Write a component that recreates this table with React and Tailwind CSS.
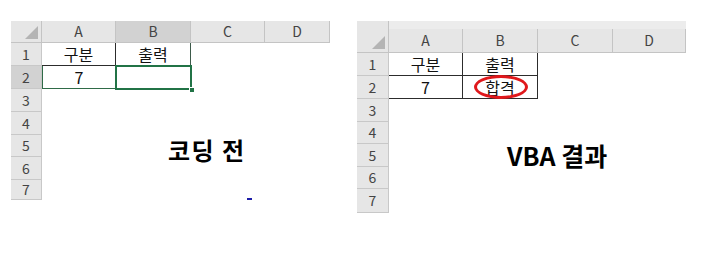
import React from 'react';

const FONT = { fontFamily: '"Noto Sans CJK KR", "Noto Sans", sans-serif' };

// corner of the sheet: the small grey triangle in the select-all box
function CornerCell({ className }) {
  return (
    <div className={`flex items-end justify-end pr-[3px] pb-[3px] bg-[#e6e6e6] border-r border-b border-[#c4c4c4] ${className || ''}`}>
      <svg width="13" height="13" viewBox="0 0 13 13">
        <polygon points="13,0 13,13 0,13" fill="#b4b4b4" />
      </svg>
    </div>
  );
}

function ColHead({ label, active }) {
  return (
    <div className={`flex items-center justify-center text-[14px] text-[#444] border-r border-b border-[#c4c4c4] ${active ? 'bg-[#d2d2d2]' : 'bg-[#e6e6e6]'}`}>
      {label}
    </div>
  );
}

function RowHead({ n, active }) {
  return (
    <div className={`flex items-center justify-center text-[14px] text-[#444] border-r border-b border-[#c8c8c8] ${active ? 'bg-[#d2d2d2]' : 'bg-[#e6e6e6]'}`}>
      {n}
    </div>
  );
}

function Cell({ children, boxed, className }) {
  return (
    <div className={`relative flex items-center justify-center text-[16px] text-[#111] ${boxed ? 'border-r border-b border-[#2c2c2c]' : ''} ${className || ''}`}>
      {children}
    </div>
  );
}

function BeforeSheet() {
  const rows = [3, 4, 5, 6, 7];
  return (
    <div className="relative ml-[11px] mt-[21px] w-[319px]">
      <div className="grid grid-cols-[31px_74px_75px_74px_65px] grid-rows-[22px_23px_23px_23px_23px_22px_23px_20px] overflow-hidden">
        <CornerCell />
        <ColHead label="A" />
        <ColHead label="B" active />
        <ColHead label="C" />
        <ColHead label="D" />

        <RowHead n={1} />
        <Cell boxed>구분</Cell>
        <Cell boxed className="border-[#3d5a4a]">출력</Cell>
        <Cell />
        <Cell />

        <RowHead n={2} active />
        <Cell boxed className="border-l border-l-[#2f6b47] border-b-[#2f6b47]">7</Cell>
        <Cell>
          <div className="absolute -left-px -top-px -right-px -bottom-px border-2 border-[#217346]" />
          <div className="absolute -right-[4px] -bottom-[4px] w-[6px] h-[6px] bg-[#217346] border border-white" />
        </Cell>
        <Cell />
        <Cell />

        {rows.map((n) => (
          <React.Fragment key={n}>
            <RowHead n={n} />
            <Cell />
            <Cell />
            <Cell />
            <Cell />
          </React.Fragment>
        ))}
      </div>
      <div className="absolute left-[157px] top-[117px] text-[24px] font-bold leading-none text-black tracking-[1.5px]">
        코딩 전
      </div>
    </div>
  );
}

function AfterSheet() {
  const rows = [3, 4, 5, 6, 7];
  return (
    <div className="relative ml-[27px] mt-[21px] w-[329px]">
      <div className="h-[8px] bg-[#ececec]" />
      <div className="grid grid-cols-[32px_74px_75px_75px_73px] grid-rows-[24px_23px_23px_23px_22px_23px_22px_24px]">
        <CornerCell className="-mt-[8px] h-[32px]" />
        <ColHead label="A" />
        <ColHead label="B" />
        <ColHead label="C" />
        <ColHead label="D" />

        <RowHead n={1} />
        <Cell boxed>구분</Cell>
        <Cell boxed>출력</Cell>
        <Cell />
        <Cell />

        <RowHead n={2} />
        <Cell boxed>7</Cell>
        <Cell boxed>
          합격
          <div className="absolute left-[11px] top-[-1px] w-[54px] h-[24px] rounded-[50%] border-[3px] border-[#e0181c]" />
        </Cell>
        <Cell />
        <Cell />

        {rows.map((n) => (
          <React.Fragment key={n}>
            <RowHead n={n} />
            <Cell />
            <Cell />
            <Cell />
            <Cell />
          </React.Fragment>
        ))}
      </div>
      <div className="absolute left-[150px] top-[122px] text-[25px] font-bold leading-none text-black">
        VBA 결과
      </div>
    </div>
  );
}

export default function App() {
  return (
    <div className="relative w-[704px] h-[257px] bg-white flex items-start overflow-hidden" style={FONT}>
      <BeforeSheet />
      <AfterSheet />
      {/* stray cursor mark under the first sheet */}
      <div className="absolute left-[247px] top-[198px] w-[5px] h-[2px] bg-[#1c1ca8]" />
    </div>
  );
}
